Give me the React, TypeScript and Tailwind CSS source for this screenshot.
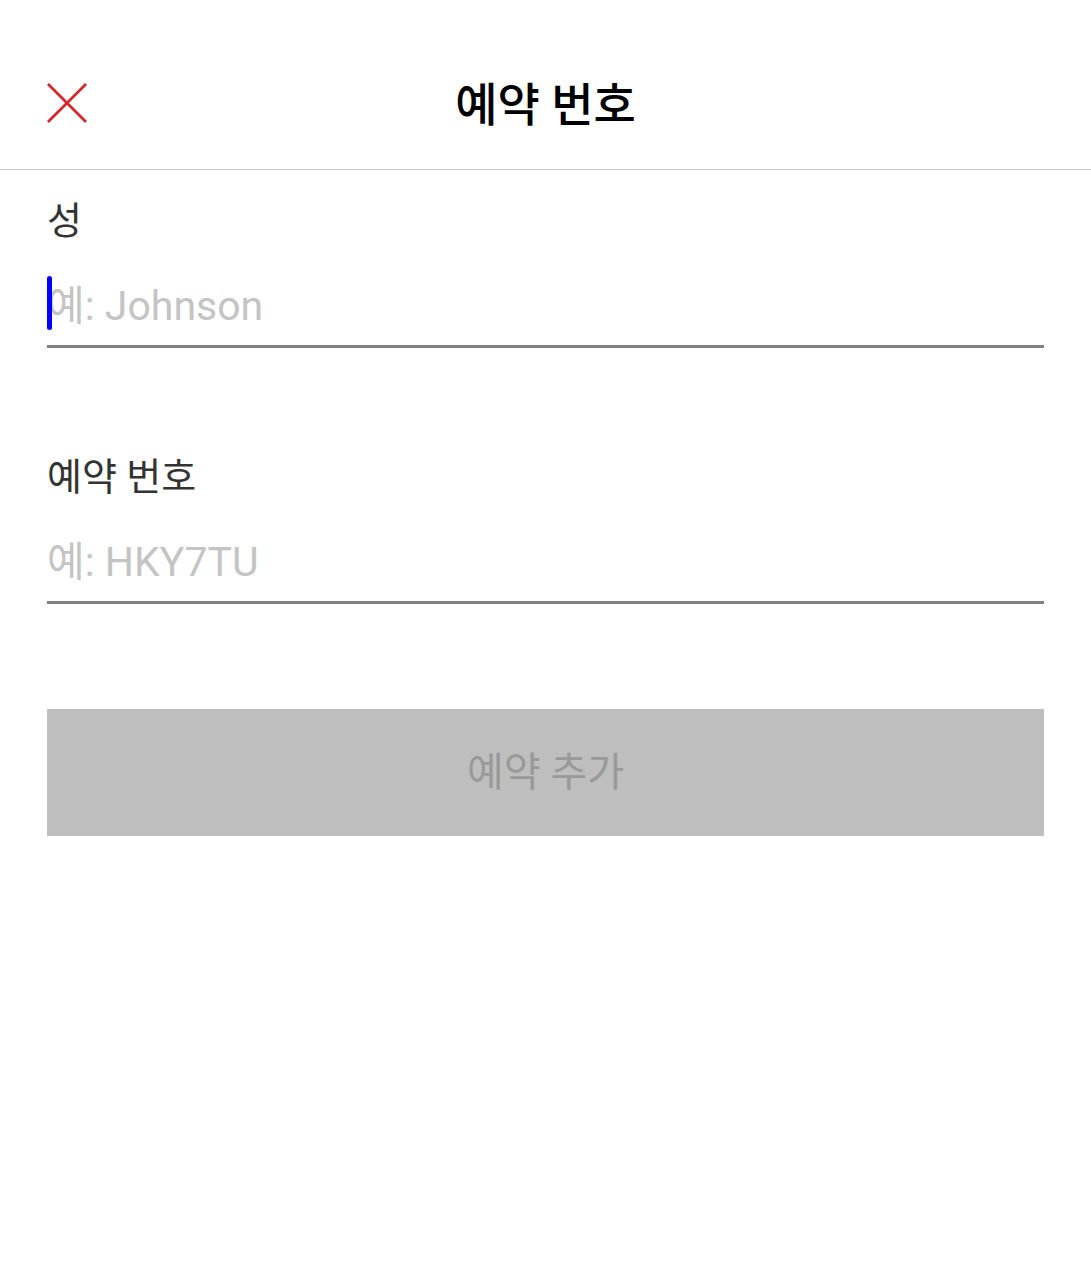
import React from "react";

const font = { fontFamily: "Roboto, 'Noto Sans CJK KR', sans-serif" };

function Field({ label, placeholder, focused }: { label: string; placeholder: string; focused?: boolean }) {
  return (
    <div className="flex flex-col">
      <label className="text-[38px] leading-[52px] text-[#333333]">{label}</label>
      <div className="relative mt-[32px] border-b-[3px] border-[#808080]">
        {focused && (
          <span className="absolute left-0 top-[-3px] w-[5px] h-[54px] rounded-full bg-[#0000ff]" />
        )}
        <input
          placeholder={placeholder}
          className="w-full h-[66px] pb-[12px] text-[41px] leading-[56px] outline-none bg-transparent placeholder:text-[#c4c4c4] text-[#333]"
          style={font}
        />
      </div>
    </div>
  );
}

export default function App() {
  return (
    <div className="min-h-[1280px] bg-white" style={font}>
      <header className="h-[170px] border-b border-[#c8c8c8] grid grid-cols-[1fr_auto_1fr] items-center px-[47px] pt-[36px]">
        <button className="w-[40px] h-[40px] flex items-center justify-center">
          <svg width="42" height="42" viewBox="0 0 42 42" fill="none">
            <path d="M1 1 L41 41 M41 1 L1 41" stroke="#d3272b" strokeWidth="3" />
          </svg>
        </button>
        <h1 className="mt-[5px] text-[46px] font-medium text-black">예약 번호</h1>
        <div />
      </header>
      <main className="px-[47px] pt-[25px] flex flex-col">
        <Field label="성" placeholder="예: Johnson" focused />
        <div className="h-[103px]" />
        <Field label="예약 번호" placeholder="예: HKY7TU" />
        <button
          disabled
          className="mt-[105px] h-[127px] w-full bg-[#bebebe] text-[40px] text-[#999999]"
        >
          예약 추가
        </button>
      </main>
    </div>
  );
}
